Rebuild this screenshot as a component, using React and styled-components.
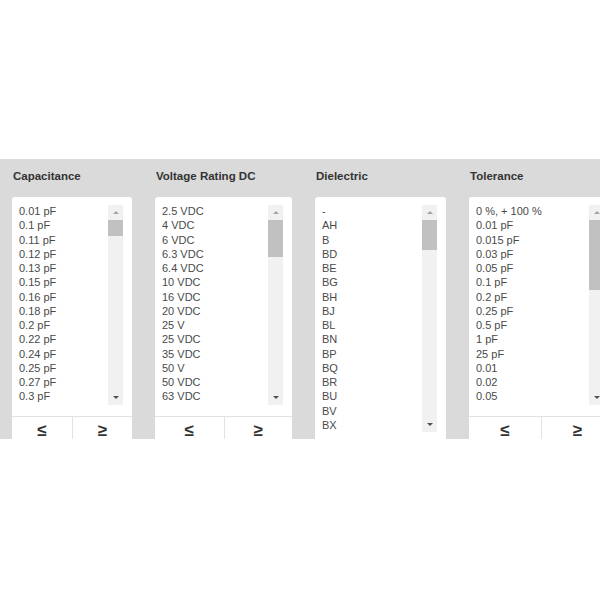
import React from "react";
import styled, { createGlobalStyle } from "styled-components";

const Global = createGlobalStyle`
  html, body { margin: 0; padding: 0; background: #ffffff; overflow: hidden; }
  body { font-family: "Liberation Sans", Arial, sans-serif; }
`;

const Page = styled.div`
  padding-top: 159px;
`;

const Band = styled.div`
  height: 280px;
  background: #dadada;
  display: flex;
  gap: 23px;
  padding-left: 12px;
  overflow: hidden;
`;

const Column = styled.div`
  display: flex;
  flex-direction: column;
  flex: 0 0 ${(p) => p.$w}px;
  width: ${(p) => p.$w}px;
  padding-top: 10px;
`;

const Title = styled.div`
  font-size: 11.5px;
  font-weight: bold;
  line-height: 14px;
  color: #333333;
  padding-left: 1px;
  margin-bottom: 14px;
  white-space: nowrap;
`;

const Card = styled.div`
  flex: 1;
  background: #ffffff;
  border-radius: 3px 3px 0 0;
  display: flex;
  flex-direction: column;
`;

const ListArea = styled.div`
  display: flex;
  height: ${(p) => p.$h}px;
  padding: 7px 9px 0 7px;
`;

const Options = styled.div`
  flex: 1;
  overflow: hidden;
  font-size: 11px;
  line-height: 14.27px;
  color: #4a4a4a;
  white-space: nowrap;
`;

const Track = styled.div`
  width: 15px;
  margin-top: 1px;
  background: #f1f1f1;
  display: flex;
  flex-direction: column;
`;

const ArrowBox = styled.div`
  height: 15px;
  display: flex;
  align-items: center;
  justify-content: center;
  flex: 0 0 15px;
`;

const Triangle = styled.div`
  width: 0;
  height: 0;
  border-left: 3.5px solid transparent;
  border-right: 3.5px solid transparent;
  ${(p) =>
    p.$up
      ? `border-bottom: 3.5px solid #a3a3a3;`
      : `border-top: 3.5px solid #505050;`}
`;

const Thumb = styled.div`
  height: ${(p) => p.$h}px;
  background: #c1c1c1;
`;

const Spacer = styled.div`
  flex: 1;
`;

const Footer = styled.div`
  margin-top: 11px;
  border-top: 1px solid #e3e3e3;
  display: grid;
  grid-template-columns: 1fr 1fr;
`;

const CompareButton = styled.div`
  height: 28px;
  display: flex;
  align-items: center;
  justify-content: center;
  font-size: 17px;
  font-weight: bold;
  color: #333333;
  ${(p) => (p.$divided ? `border-left: 1px solid #e3e3e3;` : "")}
`;

const columns = [
  {
    title: "Capacitance",
    w: 120,
    listH: 201,
    thumb: 16,
    buttons: true,
    items: [
      "0.01 pF", "0.1 pF", "0.11 pF", "0.12 pF", "0.13 pF", "0.15 pF", "0.16 pF",
      "0.18 pF", "0.2 pF", "0.22 pF", "0.24 pF", "0.25 pF", "0.27 pF", "0.3 pF",
    ],
  },
  {
    title: "Voltage Rating DC",
    w: 137,
    listH: 201,
    thumb: 37,
    buttons: true,
    items: [
      "2.5 VDC", "4 VDC", "6 VDC", "6.3 VDC", "6.4 VDC", "10 VDC", "16 VDC",
      "20 VDC", "25 V", "25 VDC", "35 VDC", "50 V", "50 VDC", "63 VDC",
    ],
  },
  {
    title: "Dielectric",
    w: 131,
    listH: 228,
    thumb: 30,
    buttons: false,
    items: [
      "-", "AH", "B", "BD", "BE", "BG", "BH", "BJ", "BL", "BN", "BP", "BQ",
      "BR", "BU", "BV", "BX",
    ],
  },
  {
    title: "Tolerance",
    w: 144,
    listH: 201,
    thumb: 70,
    buttons: true,
    items: [
      "0 %, + 100 %", "0.01 pF", "0.015 pF", "0.03 pF", "0.05 pF", "0.1 pF",
      "0.2 pF", "0.25 pF", "0.5 pF", "1 pF", "25 pF", "0.01", "0.02", "0.05",
    ],
  },
];

function Scrollbar({ thumb }) {
  return (
    <Track>
      <ArrowBox>
        <Triangle $up />
      </ArrowBox>
      <Thumb $h={thumb} />
      <Spacer />
      <ArrowBox>
        <Triangle />
      </ArrowBox>
    </Track>
  );
}

export default function App() {
  return (
    <>
      <Global />
      <Page>
        <Band>
          {columns.map((c) => (
            <Column key={c.title} $w={c.w}>
              <Title>{c.title}</Title>
              <Card>
                <ListArea $h={c.listH}>
                  <Options>
                    {c.items.map((it, i) => (
                      <div key={i}>{it}</div>
                    ))}
                  </Options>
                  <Scrollbar thumb={c.thumb} />
                </ListArea>
                {c.buttons && (
                  <Footer>
                    <CompareButton>≤</CompareButton>
                    <CompareButton $divided>≥</CompareButton>
                  </Footer>
                )}
              </Card>
            </Column>
          ))}
        </Band>
      </Page>
    </>
  );
}
